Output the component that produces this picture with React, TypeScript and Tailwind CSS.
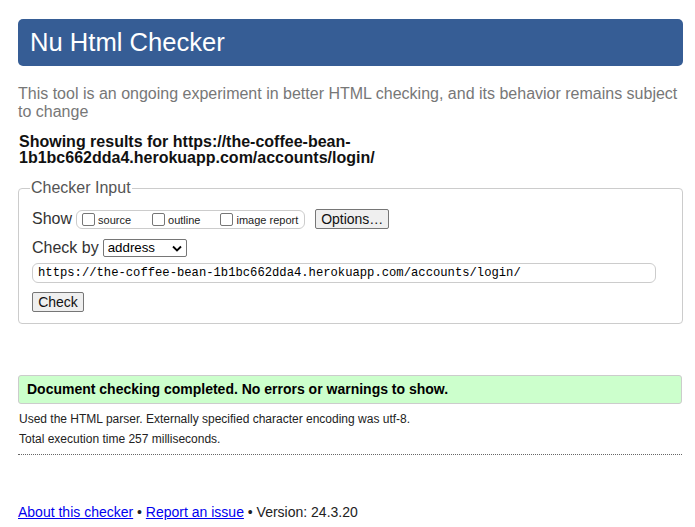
import React from "react";

const Box = ({ label }: { label: string }) => (
  <span className="flex items-center">
    <span className="w-[13px] h-[13px] border border-[#767676] rounded-[2px] bg-white" />
    <span className="ml-[3px] text-[11px] leading-none translate-y-[1px]">{label}</span>
  </span>
);

export default function App() {
  return (
    <div className="min-h-[527px] bg-white text-[#222] font-['Liberation_Sans',Arial,sans-serif]">
      <div className="w-[665px] ml-[18px] pt-[19px]">
        <header className="h-[47px] bg-[#365d95] rounded-[5px] flex items-center pl-[12px]">
          <h1 className="text-white text-[25.6px] leading-none">Nu Html Checker</h1>
        </header>

        <p className="mt-[19px] text-[16px] leading-[18px] text-[#777]">
          This tool is an ongoing experiment in better HTML checking, and its behavior remains subject to change
        </p>

        <p className="mt-[13px] ml-[1px] text-[16px] leading-[16px] font-bold text-[#111]">
          Showing results for https://the-coffee-bean-
          <br />
          1b1bc662dda4.herokuapp.com/accounts/login/
        </p>

        <fieldset className="mt-[13px] border border-[#ccc] rounded-[4px] pl-[13px] pr-[26px] pb-[11px]">
          <legend className="ml-[-2px] px-[1px] text-[16px] leading-[18px] text-[#555]">Checker Input</legend>

          <div className="flex items-center mt-[12px] h-[20px]">
            <span className="text-[16px] text-[#333]">Show</span>
            <div className="ml-[4px] h-[19px] flex items-center border border-[#ccc] rounded-[6px] pl-[5px] pr-[6px] text-[#222]">
              <Box label="source" />
              <span className="w-[21px]" />
              <Box label="outline" />
              <span className="w-[20px]" />
              <Box label="image report" />
            </div>
            <button className="ml-[10px] h-[20px] w-[74px] border border-[#767676] rounded-[2px] bg-[#efefef] text-[14px] leading-none text-[#111]">
              Options…
            </button>
          </div>

          <div className="flex items-center mt-[10px] h-[18px]">
            <span className="text-[16px] text-[#333]">Check by</span>
            <div className="ml-[4px] w-[84px] h-[18px] border border-[#767676] rounded-[2px] flex items-center justify-between pl-[4px] pr-[4px] text-[13.3px] text-black">
              <span>address</span>
              <svg width="10" height="7" viewBox="0 0 10 7" className="mt-[1px]">
                <path d="M1 1.5 L5 5.5 L9 1.5" fill="none" stroke="#000" strokeWidth="1.8" />
              </svg>
            </div>
          </div>

          <div className="mt-[6px] h-[20px] border border-[#ccc] rounded-[6px] flex items-center pl-[5px] font-['Liberation_Mono','DejaVu_Sans_Mono',monospace] text-[12.2px] text-black">
            https://the-coffee-bean-1b1bc662dda4.herokuapp.com/accounts/login/
          </div>

          <button className="mt-[9px] h-[20px] w-[52px] border border-[#767676] rounded-[2px] bg-[#efefef] text-[14px] leading-none text-[#111] block">
            Check
          </button>
        </fieldset>

        <div className="mt-[51px] w-[664px] h-[29px] bg-[#ccffcc] border border-[#ccc] rounded-[3px] flex items-center pl-[8px]">
          <span className="font-bold text-[14px] text-black">
            Document checking completed. No errors or warnings to show.
          </span>
        </div>

        <p className="mt-[8px] ml-[1px] text-[12px] leading-[14px] text-[#222]">
          Used the HTML parser. Externally specified character encoding was utf-8.
        </p>
        <p className="mt-[6px] ml-[1px] text-[12px] leading-[14px] text-[#222]">
          Total execution time 257 milliseconds.
        </p>

        <div className="mt-[8px] w-[664px] border-b border-dotted border-[#666]" />

        <footer className="mt-[49px] text-[14px] leading-[16px] text-[#222]">
          <a href="#" className="text-[#0000ee] underline">About this checker</a>
          {" • "}
          <a href="#" className="text-[#0000ee] underline">Report an issue</a>
          {" • Version: 24.3.20"}
        </footer>
      </div>
    </div>
  );
}
